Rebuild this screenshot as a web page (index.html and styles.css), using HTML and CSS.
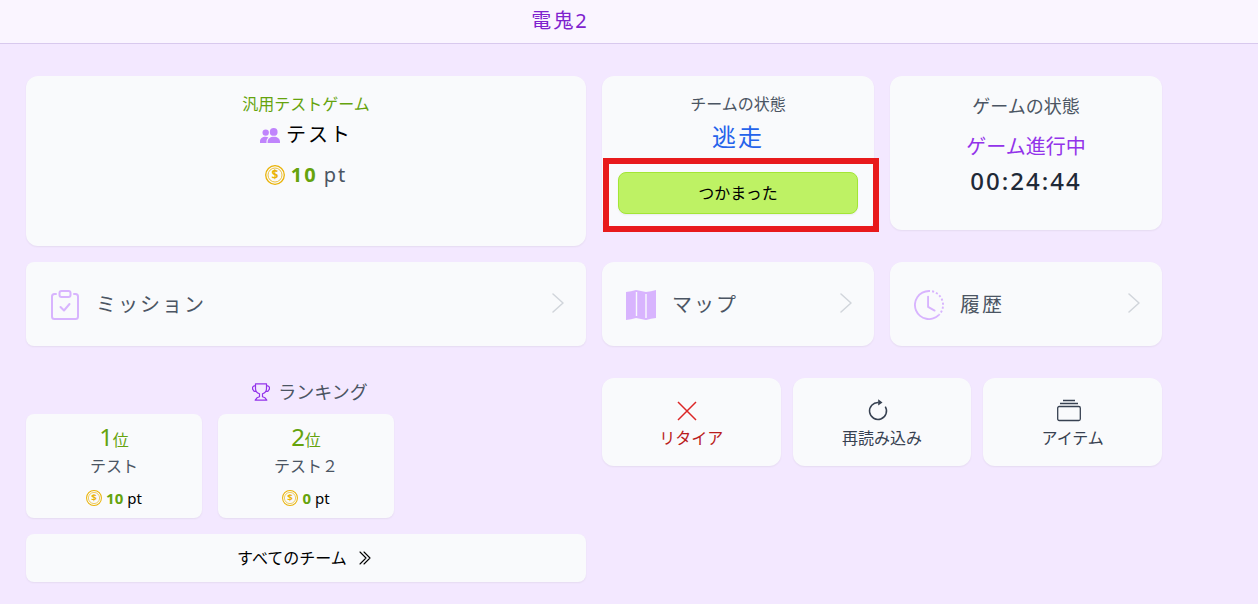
FILE: index.html
```html
<!DOCTYPE html>
<html lang="ja">
<head>
  <meta charset="UTF-8" />
  <meta name="viewport" content="width=device-width, initial-scale=1.0"/>
  <title>電鬼2</title>
  <link rel="stylesheet" href="styles.css">
</head>
<body>
  <!-- Shared icons -->
  <svg class="sprite" aria-hidden="true">
    <symbol id="coin" viewBox="0 0 20 20">
      <circle cx="10" cy="10" r="9.3" fill="none" stroke="currentColor" stroke-width="1.3"/>
      <circle cx="10" cy="10" r="7" fill="none" stroke="currentColor" stroke-width="0.8"/>
      <text x="10" y="14.200" text-anchor="middle" font-size="12" letter-spacing="0" font-weight="bold" fill="currentColor">$</text>
    </symbol>
    <symbol id="chevron" viewBox="0 0 12 20">
      <path d="M1 1l10 9-10 9" fill="none" stroke="currentColor" stroke-width="1.5" stroke-linecap="round" stroke-linejoin="round"/>
    </symbol>
  </svg>

  <header class="header">
    <h1 class="title">電鬼2</h1>
  </header>

  <main class="dashboard">
    <section class="card team">
      <p class="game-name">汎用テストゲーム</p>
      <p class="team-name">
        <svg class="icon-users" viewBox="0 0 20 15" fill="currentColor">
          <circle cx="5.7" cy="4.6" r="3.2"/>
          <path d="M0 15v-1.6C0 10.4 2.4 8.7 5.4 8.7c1.2 0 2.2.2 3 .7C7 10.6 6.500 12 6.500 13.6V15z"/>
          <circle cx="13.7" cy="3.9" r="3.9"/>
          <path d="M7.6 15v-1.3c0-3 2.6-5 6.2-5s6.200 2 6.200 5V15z"/>
        </svg>
        テスト
      </p>
      <p class="team-points"><svg class="coin"><use href="#coin"/></svg><b>10</b> <span>pt</span></p>
    </section>

    <section class="states">
      <div class="card team-state">
        <h2 class="label">チームの状態</h2>
        <p class="state-text">逃走</p>
        <div class="caught">
          <button type="button" class="btn-caught">つかまった</button>
          <span class="highlight"></span>
        </div>
      </div>
      <div class="card game-state">
        <h2 class="game-label">ゲームの状態</h2>
        <p class="progress">ゲーム進行中</p>
        <p class="timer">00:24:44</p>
      </div>
    </section>

    <a href="#mission" class="card link mission">
      <svg class="link-icon" viewBox="0 0 30 30" fill="none" stroke="currentColor" stroke-width="2" stroke-linecap="round" stroke-linejoin="round">
        <path d="M6 4H4.5A2.5 2.5 0 0 0 2 6.5v20A2.5 2.5 0 0 0 4.5 29h21a2.5 2.5 0 0 0 2.5-2.5v-20A2.5 2.5 0 0 0 25.5 4H24"/>
        <rect x="9.500" y="1" width="11" height="6" rx="2"/>
        <path d="M10.500 17l3.500 3.500 5.500-6.500"/>
      </svg>
      <span>ミッション</span>
      <svg class="chevron"><use href="#chevron"/></svg>
    </a>

    <nav class="links">
      <a href="#map" class="card link">
        <svg class="link-icon" viewBox="0 0 30 30" fill="currentColor">
          <path d="M0 2q5-.5 10-2l10 2q5-.5 10-2v28q-5 .5-10 2l-10-2q-5 1.500-10 2z"/>
          <path d="M10.500 2v24M20 4v24" stroke="#f9fafc" stroke-width="1.400"/>
        </svg>
        <span>マップ</span>
        <svg class="chevron"><use href="#chevron"/></svg>
      </a>
      <a href="#history" class="card link">
        <svg class="link-icon" viewBox="0 0 16 16" fill="currentColor">
          <path d="M8.515 1.019A7 7 0 0 0 8 1V0a8 8 0 0 1 .589.022zm2.004.45a7 7 0 0 0-.985-.299l.219-.976q.576.129 1.126.342zm1.37.71a7 7 0 0 0-.439-.27l.493-.87a8 8 0 0 1 .979.654l-.615.789a7 7 0 0 0-.418-.302zm1.834 1.79a7 7 0 0 0-.653-.796l.724-.69q.406.429.747.91zm.744 1.352a7 7 0 0 0-.214-.468l.893-.45a8 8 0 0 1 .45 1.088l-.95.313a7 7 0 0 0-.179-.483m.53 2.507a7 7 0 0 0-.1-1.025l.985-.17q.1.58.116 1.17zm-.131 1.538q.05-.254.081-.51l.993.123a8 8 0 0 1-.23 1.155l-.964-.267q.069-.247.12-.501m-.952 2.379q.276-.436.486-.908l.914.405q-.24.54-.555 1.038zm-.964 1.205q.183-.183.35-.378l.758.653a8 8 0 0 1-.401.432z"/>
          <path d="M8 1a7 7 0 1 0 4.95 11.95l.707.707A8.001 8.001 0 1 1 8 0z"/>
          <path d="M7.5 3a.5.5 0 0 1 .5.5v5.21l3.248 1.856a.5.5 0 0 1-.496.868l-3.5-2A.5.5 0 0 1 7 9V3.5a.5.5 0 0 1 .5-.5"/>
        </svg>
        <span>履歴</span>
        <svg class="chevron"><use href="#chevron"/></svg>
      </a>
    </nav>

    <!-- Ranking -->
    <section class="ranking">
      <h2 class="ranking-title">
        <svg class="icon-trophy" viewBox="0 0 18 18" fill="none" stroke="currentColor" stroke-width="1.200" stroke-linejoin="round">
          <path d="M3.500.8h11v4.700c0 2.500-1.800 4.600-4 5.300v2.900l2.500 1.100 1.800 2.400H3.200L5 14.800l2.500-1.100v-2.900c-2.200-.7-4-2.800-4-5.300z"/>
          <path d="M3.500 2.800H2L.6 4.200v2l1.600 2.200h1.900M14.500 2.800H16l1.400 1.400v2l-1.600 2.200h-1.900"/>
        </svg>
        ランキング
      </h2>
      <div class="ranks">
        <div class="card rank">
          <p class="place"><span>1</span>位</p>
          <p class="rank-team">テスト</p>
          <p class="rank-points"><svg class="coin"><use href="#coin"/></svg><b>10</b> pt</p>
        </div>
        <div class="card rank">
          <p class="place"><span>2</span>位</p>
          <p class="rank-team">テスト２</p>
          <p class="rank-points"><svg class="coin"><use href="#coin"/></svg><b>0</b> pt</p>
        </div>
      </div>
      <button type="button" class="card all-teams">
        すべてのチーム
        <svg class="icon-double" viewBox="0 0 12 14" fill="none" stroke="currentColor" stroke-width="1.1" stroke-linecap="round" stroke-linejoin="round">
          <path d="M1 1l6 6-6 6M5 1l6 6-6 6"/>
        </svg>
      </button>
    </section>

    <section class="actions">
      <button type="button" class="card action retire">
        <svg viewBox="0 0 24 24" fill="none" stroke="currentColor" stroke-width="1.5">
          <path d="M3 3l18 18M21 3L3 21"/>
        </svg>
        リタイア
      </button>
      <button type="button" class="card action">
        <svg viewBox="0 0 24 24" fill="none" stroke="currentColor" stroke-width="1.5">
          <path d="M12.5 3.500A8.500 8.500 0 1 0 19.300 7.600"/>
          <path d="M12.200.2v6.400l4.300-3.200z" fill="currentColor" stroke="none"/>
        </svg>
        再読み込み
      </button>
      <button type="button" class="card action">
        <svg viewBox="0 0 24 24" fill="none" stroke="currentColor" stroke-width="1.3">
          <path d="M6 1.500h12M3 4.500h18"/>
          <rect x=".7" y="7.5" width="22.600" height="14" rx="1.5"/>
        </svg>
        アイテム
      </button>
    </section>
  </main>
</body>
</html>
```
FILE: styles.css
```css
* {
  box-sizing: border-box;
}

body {
  margin: 0;
  min-height: 100vh;
  background: #f3e8ff;
  color: #000;
  font-family: 'Noto Sans', 'Noto Sans CJK JP', sans-serif;
  font-size: 16px;
  line-height: 24px;
}

h1, h2, p {
  margin: 0;
  font-weight: normal;
}

button {
  border: none;
  font: inherit;
  color: inherit;
  cursor: pointer;
}

svg {
  flex-shrink: 0;
}

.sprite {
  display: none;
}

.header {
  padding: 7px 138px 8px 0;
  background: #faf5ff;
  border-bottom: 1px solid #d8c9ee;
}

.title {
  text-align: center;
  font-size: 20px;
  line-height: 28px;
  letter-spacing: 2px;
  color: #7e22ce;
}

.dashboard {
  display: grid;
  grid-template-columns: 1fr 1fr;
  align-items: start;
  column-gap: 16px;
  padding: 32px 96px 22px 26px;
}

.card {
  display: block;
  background: #f9fafc;
  border-radius: 12px;
  box-shadow: 0 1px 2px rgba(0, 0, 0, 0.06);
  text-align: center;
}

/* team */
.team {
  min-height: 170px;
  padding: 16px;
}

.game-name {
  color: #65a30d;
}

.team-name,
.team-points {
  display: flex;
  justify-content: center;
  align-items: center;
  gap: 6px;
  font-size: 20px;
  line-height: 28px;
  letter-spacing: 2px;
}

.team-name {
  margin-top: 5px;
}

.icon-users {
  width: 20px;
  height: 15px;
  color: #c084fc;
}

.team-points {
  margin-top: 12px;
  color: #4b5563;
}

.team-points .coin {
  width: 20px;
  height: 20px;
}

.coin {
  color: #eab308;
}

b {
  color: #65a30d;
}

/* states */
.states,
.links {
  display: grid;
  grid-template-columns: 1fr 1fr;
  align-items: start;
  gap: 16px;
}

.team-state,
.game-state {
  min-height: 154px;
  padding: 16px;
}

.label,
.game-label {
  font-size: 16px;
  color: #4b5563;
}

.state-text {
  font-size: 24px;
  line-height: 42px;
  letter-spacing: 2px;
  color: #2563eb;
}

.caught {
  position: relative;
  margin-top: 14px;
}

.btn-caught {
  display: block;
  width: 100%;
  height: 42px;
  background: #bef264;
  border: 1px solid #a3e635;
  border-radius: 8px;
  box-shadow: 0 1px 2px rgba(0, 0, 0, 0.06);
}

.highlight {
  position: absolute;
  inset: -14px -21px -18px -15px;
  border: 6px solid #e81a1c;
  pointer-events: none;
}

.game-label {
  font-size: 18px;
  line-height: 28px;
}

.progress {
  margin-top: 13px;
  font-size: 20px;
  line-height: 28px;
  color: #9333ea;
}

.timer {
  margin-top: 4px;
  font-size: 24px;
  line-height: 32px;
  font-weight: 500;
  letter-spacing: 2px;
  color: #1f2937;
}

/* links */
.mission,
.links {
  margin-top: 16px;
}

.link {
  display: flex;
  align-items: center;
  gap: 16px;
  height: 84px;
  padding: 2px 22px 0 24px;
  font-size: 20px;
  line-height: 28px;
  letter-spacing: 2px;
  color: #4b5563;
  text-decoration: none;
}

.mission,
.rank,
.all-teams {
  border-radius: 8px;
}

.link-icon {
  width: 30px;
  height: 30px;
  color: #d8b4fe;
}

.chevron {
  width: 12px;
  height: 20px;
  margin: 0 0 4px auto;
  color: #d1d5db;
}

/* ranking */
.ranking,
.actions {
  margin-top: 32px;
}

.ranking-title {
  display: flex;
  justify-content: center;
  align-items: center;
  gap: 8px;
  margin-bottom: 8px;
  padding-left: 8px;
  font-size: 18px;
  line-height: 28px;
  color: #4b5563;
}

.icon-trophy {
  width: 18px;
  height: 18px;
  color: #9333ea;
}

.ranks {
  display: grid;
  grid-template-columns: repeat(3, 1fr);
  gap: 16px;
}

.rank {
  padding: 12px 8px 8px;
}

.place {
  line-height: 28px;
  color: #65a30d;
}

.place span {
  font-size: 24px;
  line-height: 20px;
}

.rank-team {
  color: #4b5563;
}

.rank-points {
  display: flex;
  justify-content: center;
  align-items: center;
  gap: 4px;
  margin-top: 8px;
  font-size: 15px;
}

.rank-points .coin {
  width: 16px;
  height: 16px;
}

.all-teams {
  display: flex;
  justify-content: center;
  align-items: center;
  gap: 12px;
  width: 100%;
  height: 48px;
  margin-top: 16px;
  padding: 0 12px 0 8px;
}

.icon-double {
  width: 12px;
  height: 14px;
}

/* actions */
.actions {
  display: grid;
  grid-template-columns: repeat(3, 1fr);
  gap: 12px;
}

.action {
  display: flex;
  flex-direction: column;
  justify-content: center;
  align-items: center;
  gap: 3px;
  height: 88px;
  padding: 5px 0 0;
  color: #374151;
}

.action svg {
  width: 24px;
  height: 24px;
  margin-right: 8px;
}

.retire {
  color: #b91c1c;
}

.retire svg {
  color: #dc2626;
}
```
